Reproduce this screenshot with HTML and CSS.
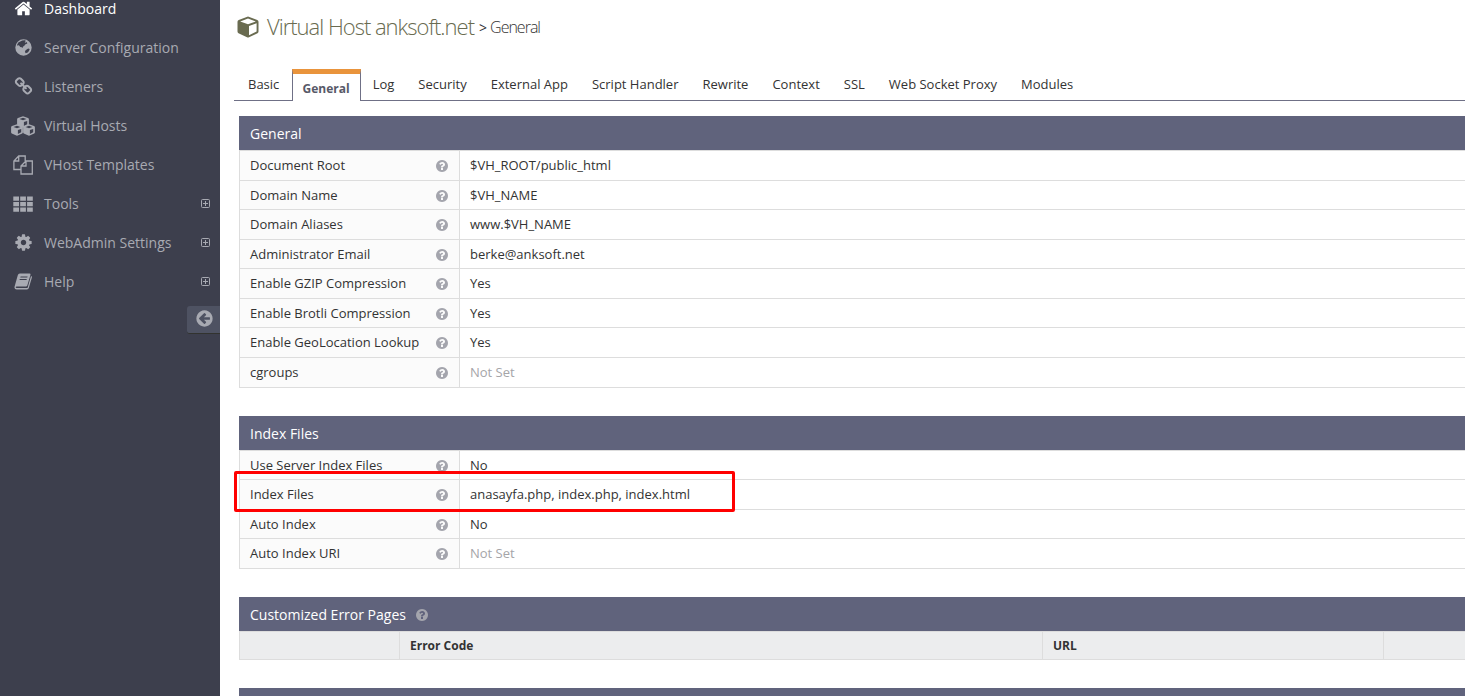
FILE: index.html
```html
<!DOCTYPE html>
<html lang="en">
<head>
    <meta charset="UTF-8">
    <meta name="viewport" content="width=device-width, initial-scale=1.0">
    <title>Virtual Host anksoft.net</title>
    <link rel="stylesheet" href="styles.css">
</head>
<body>

    <!-- shared icons -->
    <svg class="sprite">
        <symbol id="question" viewBox="0 0 1792 1792"><path d="M1024 1376v-192q0-14-9-23t-23-9h-192q-14 0-23 9t-9 23v192q0 14 9 23t23 9h192q14 0 23-9t9-23zm256-672q0-88-55.5-163t-138.5-116-170-41q-243 0-371 213-15 24 8 42l132 100q7 6 19 6 16 0 25-12 53-68 86-92 34-24 86-24 48 0 85.5 26t37.5 59q0 38-20 61t-68 45q-63 28-115.5 86.5t-52.5 125.5v36q0 14 9 23t23 9h192q14 0 23-9t9-23q0-19 21.5-49.5t54.5-49.5q32-18 49-28.5t46-35 44.5-48 28-60.5 12.5-81zm384 192q0 209-103 385.5t-279.5 279.5-385.5 103-385.5-103-279.5-279.5-103-385.5 103-385.5 279.5-279.5 385.5-103 385.5 103 279.5 279.5 103 385.5z"/></symbol>
        <symbol id="plus" viewBox="0 0 9 9"><path d="M.5 1.500q0-1 1-1h6q1 0 1 1v6q0 1-1 1h-6q-1 0-1-1zM4.500 2v5M2 4.500h5" fill="none" stroke="currentColor"/></symbol>
        <symbol id="cube" viewBox="0 0 22 22"><path fill-rule="evenodd" d="M11 .5 20.300 4q1.200.5 1.200 1.700v9.800q0 1.200-1 1.700L12 21.300q-1 .5-2 0L1.500 17.200q-1-.5-1-1.700V5.700q0-1.200 1.200-1.700zM11 2.400 3.200 5.400 11 8.300l7.800-2.900zM12 19.200l7.600-3.800V7.200L12 10z"/></symbol>
        <symbol id="small-cube" viewBox="0 0 12 12"><path fill-rule="evenodd" d="M6 .2 11 2q.9.400.9 1.200v5q0 .8-.7 1.200l-4.500 2.200q-.7.300-1.400 0L.8 9.400Q.1 9 .1 8.200v-5Q.1 2.400 1 2zM6 1.700 2.500 3 6 4.300 9.500 3zM6.900 9.900l3.300-1.600V4.900L6.900 6.100z"/></symbol>
    </svg>

    <aside class="sidebar">
        <ul class="menu">
            <li class="active">
                <span class="icon"><svg viewBox="0 0 1792 1792"><path d="M1472 992v480q0 26-19 45t-45 19h-384v-384h-256v384h-384q-26 0-45-19t-19-45v-480q0-1 .5-3t.5-3l575-474 575 474q1 2 1 6zm223-69l-62 74q-8 9-21 11h-3q-13 0-21-7l-692-577-692 577q-12 8-24 7-13-2-21-11l-62-74q-8-10-7-23.5t11-21.5l719-599q32-26 76-26t76 26l244 204v-195q0-14 9-23t23-9h192q14 0 23 9t9 23v408l219 182q10 8 11 21.5t-7 23.5z"/></svg></span>
                <span>Dashboard</span>
            </li>
            <li>
                <span class="icon"><svg viewBox="0 0 19 19"><path fill-rule="evenodd" d="M9.500 1.300a8.200 8.200 0 1 0 0 16.400 8.200 8.200 0 1 0 0-16.400zM8.300 2.500l2.500-.2 1.200.8-1.400 1 .9.600 1.300-.7.500 1.500-1.800.8-1.200 1.500-1.400 1-.2 1.200-1-.8-1.500-.2-.8-1.300-1.500-.8-.5 1.200-.4-1.200 1.300-2.300zM11.600 12.300l2.500-1.700 1.600.4q-.5 2.200-2 3.500l-2 .7-.8-1.500z"/></svg></span>
                <span>Server Configuration</span>
            </li>
            <li>
                <span class="icon"><svg viewBox="0 0 1792 1792"><path d="M1520 1216q0-40-28-68l-208-208q-28-28-68-28-42 0-72 32 3 3 19 18.500t21.500 21.500 15 19 13 25.500 3.500 27.500q0 40-28 68t-68 28q-15 0-27.500-3.500t-25.500-13-19-15-21.500-21.500-18.500-19q-33 31-33 73 0 40 28 68l206 207q27 27 68 27 40 0 68-26l147-146q28-28 28-67zm-703-705q0-40-28-68l-206-207q-28-28-68-28-39 0-68 27l-147 146q-28 28-28 67 0 40 28 68l208 208q27 27 68 27 42 0 72-31-3-3-19-18.500t-21.500-21.500-15-19-13-25.500-3.500-27.500q0-40 28-68t68-28q15 0 27.500 3.500t25.500 13 19 15 21.500 21.500 18.500 19q33-31 33-73zm895 705q0 120-85 203l-147 146q-83 83-203 83-121 0-204-85l-206-207q-83-83-83-203 0-123 88-209l-88-88q-86 88-208 88-120 0-204-84l-208-208q-84-84-84-204t85-203l147-146q83-83 203-83 121 0 204 85l206 207q83 83 83 203 0 123-88 209l88 88q86-88 208-88 120 0 204 84l208 208q84 84 84 204z"/></svg></span>
                <span>Listeners</span>
            </li>
            <li>
                <span class="icon"><svg class="cubes" viewBox="0 0 24 20"><use href="#small-cube" x="6" y="0" width="12" height="12"/><use href="#small-cube" x="0" y="8" width="12" height="12"/><use href="#small-cube" x="12" y="8" width="12" height="12"/></svg></span>
                <span>Virtual Hosts</span>
            </li>
            <li>
                <span class="icon"><svg class="files" viewBox="0 0 20 20"><path fill="none" stroke="currentColor" stroke-width="1.300" d="M8 14.500H.9V6L5.700 1h6.500v5M5.700 1v5H.9M8 11l5-5h6.300v13H8zM13 6v5H8"/></svg></span>
                <span>VHost Templates</span>
            </li>
            <li>
                <span class="icon"><svg class="files" viewBox="0 0 20 20"><path d="M.3 2.500h5.700v4.300H.3zM7.200 2.500h5.700v4.300H7.200zM14.100 2.500h5.700v4.300h-5.700zM.3 8h5.700v4.300H.3zM7.200 8h5.700v4.300H7.200zM14.100 8h5.700v4.300h-5.700zM.3 13.500h5.700v4.300H.3zM7.200 13.500h5.700v4.300H7.200zM14.100 13.500h5.700v4.300h-5.700z"/></svg></span>
                <span>Tools</span>
                <svg class="plus"><use href="#plus"/></svg>
            </li>
            <li>
                <span class="icon"><svg viewBox="0 0 1792 1792"><path d="M1152 896q0-106-75-181t-181-75-181 75-75 181 75 181 181 75 181-75 75-181zm512-109v222q0 12-8 23t-20 13l-185 28q-19 54-39 91 35 50 107 138 10 12 10 25t-9 23q-27 37-99 108t-94 71q-12 0-26-9l-138-108q-44 23-91 38-16 136-29 186-7 28-36 28h-222q-14 0-24.500-8.500t-11.500-21.500l-28-184q-49-16-90-37l-141 107q-10 9-25 9-14 0-25-11-126-114-165-168-7-10-7-23 0-12 8-23 15-21 51-66.500t54-70.500q-27-50-41-99l-183-27q-13-2-21-12.500t-8-23.500v-222q0-12 8-23t19-13l186-28q14-46 39-92-40-57-107-138-10-12-10-24 0-10 9-23 26-36 98.500-107.500t94.500-71.500q13 0 26 10l138 107q44-23 91-38 16-136 29-186 7-28 36-28h222q14 0 24.500 8.500t11.500 21.500l28 184q49 16 90 37l142-107q9-9 24-9 13 0 25 10 129 119 165 170 7 8 7 22 0 12-8 23-15 21-51 66.500t-54 70.500q26 50 41 98l183 28q13 2 21 12.500t8 23.500z"/></svg></span>
                <span>WebAdmin Settings</span>
                <svg class="plus"><use href="#plus"/></svg>
            </li>
            <li>
                <span class="icon"><svg viewBox="0 0 19 19"><path fill-rule="evenodd" d="M5.800 1.500h9.700q1.300 0 1 1.300l-3.200 10.700q-.3 1-1.500 1H2.500q-.7 0-.8.700 0 .8 1 .8h10.200q.6 0 .8-.6L17 4q1.200.4.900 1.500l-3.100 10.600q-.4 1.400-1.800 1.400H2.700q-2.200 0-2.300-2.200L3.700 3.500q.5-1.900 2.100-2zM6.600 4.500l-.3 1h7l.3-1zM5.800 7l-.3 1h7l.3-1z"/></svg></span>
                <span>Help</span>
                <svg class="plus"><use href="#plus"/></svg>
            </li>
        </ul>
        <div class="minify">
            <svg viewBox="0 0 1792 1792"><path d="M1408 960v-128q0-26-19-45t-45-19h-502l189-189q19-19 19-45t-19-45l-91-91q-18-18-45-18t-45 18l-362 362-91 91q-18 18-18 45t18 45l91 91 362 362q18 18 45 18t45-18l91-91q18-18 18-45t-18-45l-189-189h502q26 0 45-19t19-45zm256-64q0 209-103 385.500t-279.500 279.500-385.500 103-385.500-103-279.500-279.500-103-385.500 103-385.500 279.500-279.500 385.500-103 385.500 103 279.500 279.500 103 385.500z"/></svg>
        </div>
    </aside>

    <main class="content">
        <h1 class="page-title">
            <svg><use href="#cube"/></svg>
            <span class="host">Virtual Host anksoft.net</span>
            <span class="sep">&gt;</span>
            <span class="sub">General</span>
        </h1>

        <ul class="tabs">
            <li>Basic</li>
            <li class="active">General</li>
            <li>Log</li>
            <li>Security</li>
            <li>External App</li>
            <li>Script Handler</li>
            <li>Rewrite</li>
            <li>Context</li>
            <li>SSL</li>
            <li>Web Socket Proxy</li>
            <li>Modules</li>
        </ul>

        <section class="widget">
            <h2>General</h2>
            <div class="row"><div class="label">Document Root <svg class="help"><use href="#question"/></svg></div><div class="value">$VH_ROOT/public_html</div></div>
            <div class="row"><div class="label">Domain Name <svg class="help"><use href="#question"/></svg></div><div class="value">$VH_NAME</div></div>
            <div class="row"><div class="label">Domain Aliases <svg class="help"><use href="#question"/></svg></div><div class="value">www.$VH_NAME</div></div>
            <div class="row"><div class="label">Administrator Email <svg class="help"><use href="#question"/></svg></div><div class="value">berke@anksoft.net</div></div>
            <div class="row"><div class="label">Enable GZIP Compression <svg class="help"><use href="#question"/></svg></div><div class="value">Yes</div></div>
            <div class="row"><div class="label">Enable Brotli Compression <svg class="help"><use href="#question"/></svg></div><div class="value">Yes</div></div>
            <div class="row"><div class="label">Enable GeoLocation Lookup <svg class="help"><use href="#question"/></svg></div><div class="value">Yes</div></div>
            <div class="row"><div class="label">cgroups <svg class="help"><use href="#question"/></svg></div><div class="value muted">Not Set</div></div>
        </section>

        <section class="widget">
            <h2>Index Files</h2>
            <div class="row"><div class="label">Use Server Index Files <svg class="help"><use href="#question"/></svg></div><div class="value">No</div></div>
            <div class="row"><div class="label">Index Files <svg class="help"><use href="#question"/></svg></div><div class="value">anasayfa.php, index.php, index.html</div><div class="highlight"></div></div>
            <div class="row"><div class="label">Auto Index <svg class="help"><use href="#question"/></svg></div><div class="value">No</div></div>
            <div class="row"><div class="label">Auto Index URI <svg class="help"><use href="#question"/></svg></div><div class="value muted">Not Set</div></div>
        </section>

        <section class="widget">
            <h2>Customized Error Pages <svg class="help"><use href="#question"/></svg></h2>
            <div class="columns">
                <div></div>
                <div>Error Code</div>
                <div>URL</div>
                <div></div>
            </div>
        </section>

        <section class="widget">
            <h2></h2>
        </section>
    </main>

</body>
</html>
```
FILE: styles.css
```css
* {
    box-sizing: border-box;
}
body {
    font-family: "Open Sans", Arial, sans-serif;
    font-size: 13px;
    display: flex;
    height: 696px;
    margin: 0;
    overflow: hidden;
    color: #333;
    background-color: #fff;
}
ul {
    list-style: none;
    margin: 0;
    padding: 0;
}
svg {
    fill: currentColor;
    flex: none;
}
.sprite {
    display: none;
}
.sidebar {
    width: 220px;
    height: 696px;
    flex: none;
    color: #a8aab2;
    background-color: #3d3f4d;
}
.menu {
    margin-top: -11px;
}
.menu li {
    display: flex;
    align-items: center;
    height: 39px;
    padding: 0 10px 0 11px;
    font-size: 14px;
}
.menu li.active {
    color: #fff;
}
.icon {
    display: flex;
    justify-content: center;
    width: 24px;
    margin-right: 9px;
}
.icon svg {
    width: 19px;
    height: 19px;
}
.icon .cubes {
    width: 24px;
    height: 20px;
}
.icon .files {
    width: 20px;
    height: 20px;
}
.plus {
    width: 9px;
    height: 9px;
    margin-left: auto;
}
.minify {
    width: 33px;
    height: 28px;
    margin: 5px 0 0 auto;
    padding: 3px 0 0 8px;
    border-bottom: 1px solid #32332f;
    border-radius: 3px 0 0 3px;
    background-color: #4e5262;
}
.minify svg {
    display: block;
    width: 19px;
    height: 19px;
}
.content {
    flex: 1;
    min-width: 0;
    padding: 10px 0 0 14px;
}
.page-title {
    display: flex;
    align-items: center;
    height: 34px;
    margin: 0 0 25px 3px;
    font-size: 16px;
    font-weight: 300;
    letter-spacing: -1px;
}
.page-title svg {
    width: 22px;
    height: 22px;
    margin-right: 8px;
    color: #696b50;
}
.host {
    margin-top: -2px;
    font-size: 22px;
    color: #696b50;
}
.sep {
    margin: 0 4px 0 5px;
    font-size: 14px;
    font-weight: 400;
}
.tabs {
    display: flex;
    height: 32px;
    padding-left: 2px;
    border-bottom: 1px solid #6f7086;
}
.tabs li {
    height: 32px;
    padding: 0 12px;
    line-height: 31px;
}
.tabs li.active {
    width: 69px;
    margin-left: 0.3px;
    padding: 0;
    border: 1px solid #6f7086;
    border-top: 5px solid #e9943c;
    border-bottom: 0;
    line-height: 29px;
    text-align: center;
    font-size: 12px;
    font-weight: 700;
    color: #575968;
    background-color: #fff;
}
.widget {
    margin: 0 0 28px 5px;
}
.tabs + .widget {
    margin-top: 15px;
}
.widget h2 {
    display: flex;
    height: 34px;
    margin: 0;
    padding-left: 11px;
    font-size: 14px;
    font-weight: 400;
    line-height: 36px;
    color: #fff;
    background-color: #60637c;
}
.row {
    position: relative;
    display: flex;
    height: 29.57px;
    border-top: 1px solid #ddd;
    border-left: 1px solid #ddd;
    line-height: 29px;
}
.row:last-child {
    height: 30.57px;
    border-bottom: 1px solid #ddd;
}
.label {
    display: flex;
    justify-content: space-between;
    width: 220px;
    padding: 0 10px;
    border-right: 1px solid #ddd;
    background-color: #fbfbfb;
}
.value {
    padding-left: 10px;
}
.muted {
    color: #a5a5a8;
}
.help {
    width: 14px;
    height: 14px;
    margin-top: 8px;
    color: #a4a5ad;
}
h2 .help {
    margin: 11px 0 0 9px;
}
/* red frame around the index files row */
.highlight {
    position: absolute;
    z-index: 1;
    top: -9px;
    left: -6px;
    width: 501px;
    height: 41px;
    border: 3px solid #f00;
    border-radius: 2px;
}
.columns {
    display: grid;
    grid-template-columns: 160px 643px 341px 1fr;
    border: 1px solid #ddd;
    border-width: 1px 0 1px 1px;
    font-size: 12px;
    font-weight: 700;
    line-height: 28px;
    background-color: #ecedee;
}
.columns div {
    height: 27px;
    padding-left: 10px;
    border-right: 1px solid #ddd;
}
.columns div:last-child {
    border-right: 0;
}
```
